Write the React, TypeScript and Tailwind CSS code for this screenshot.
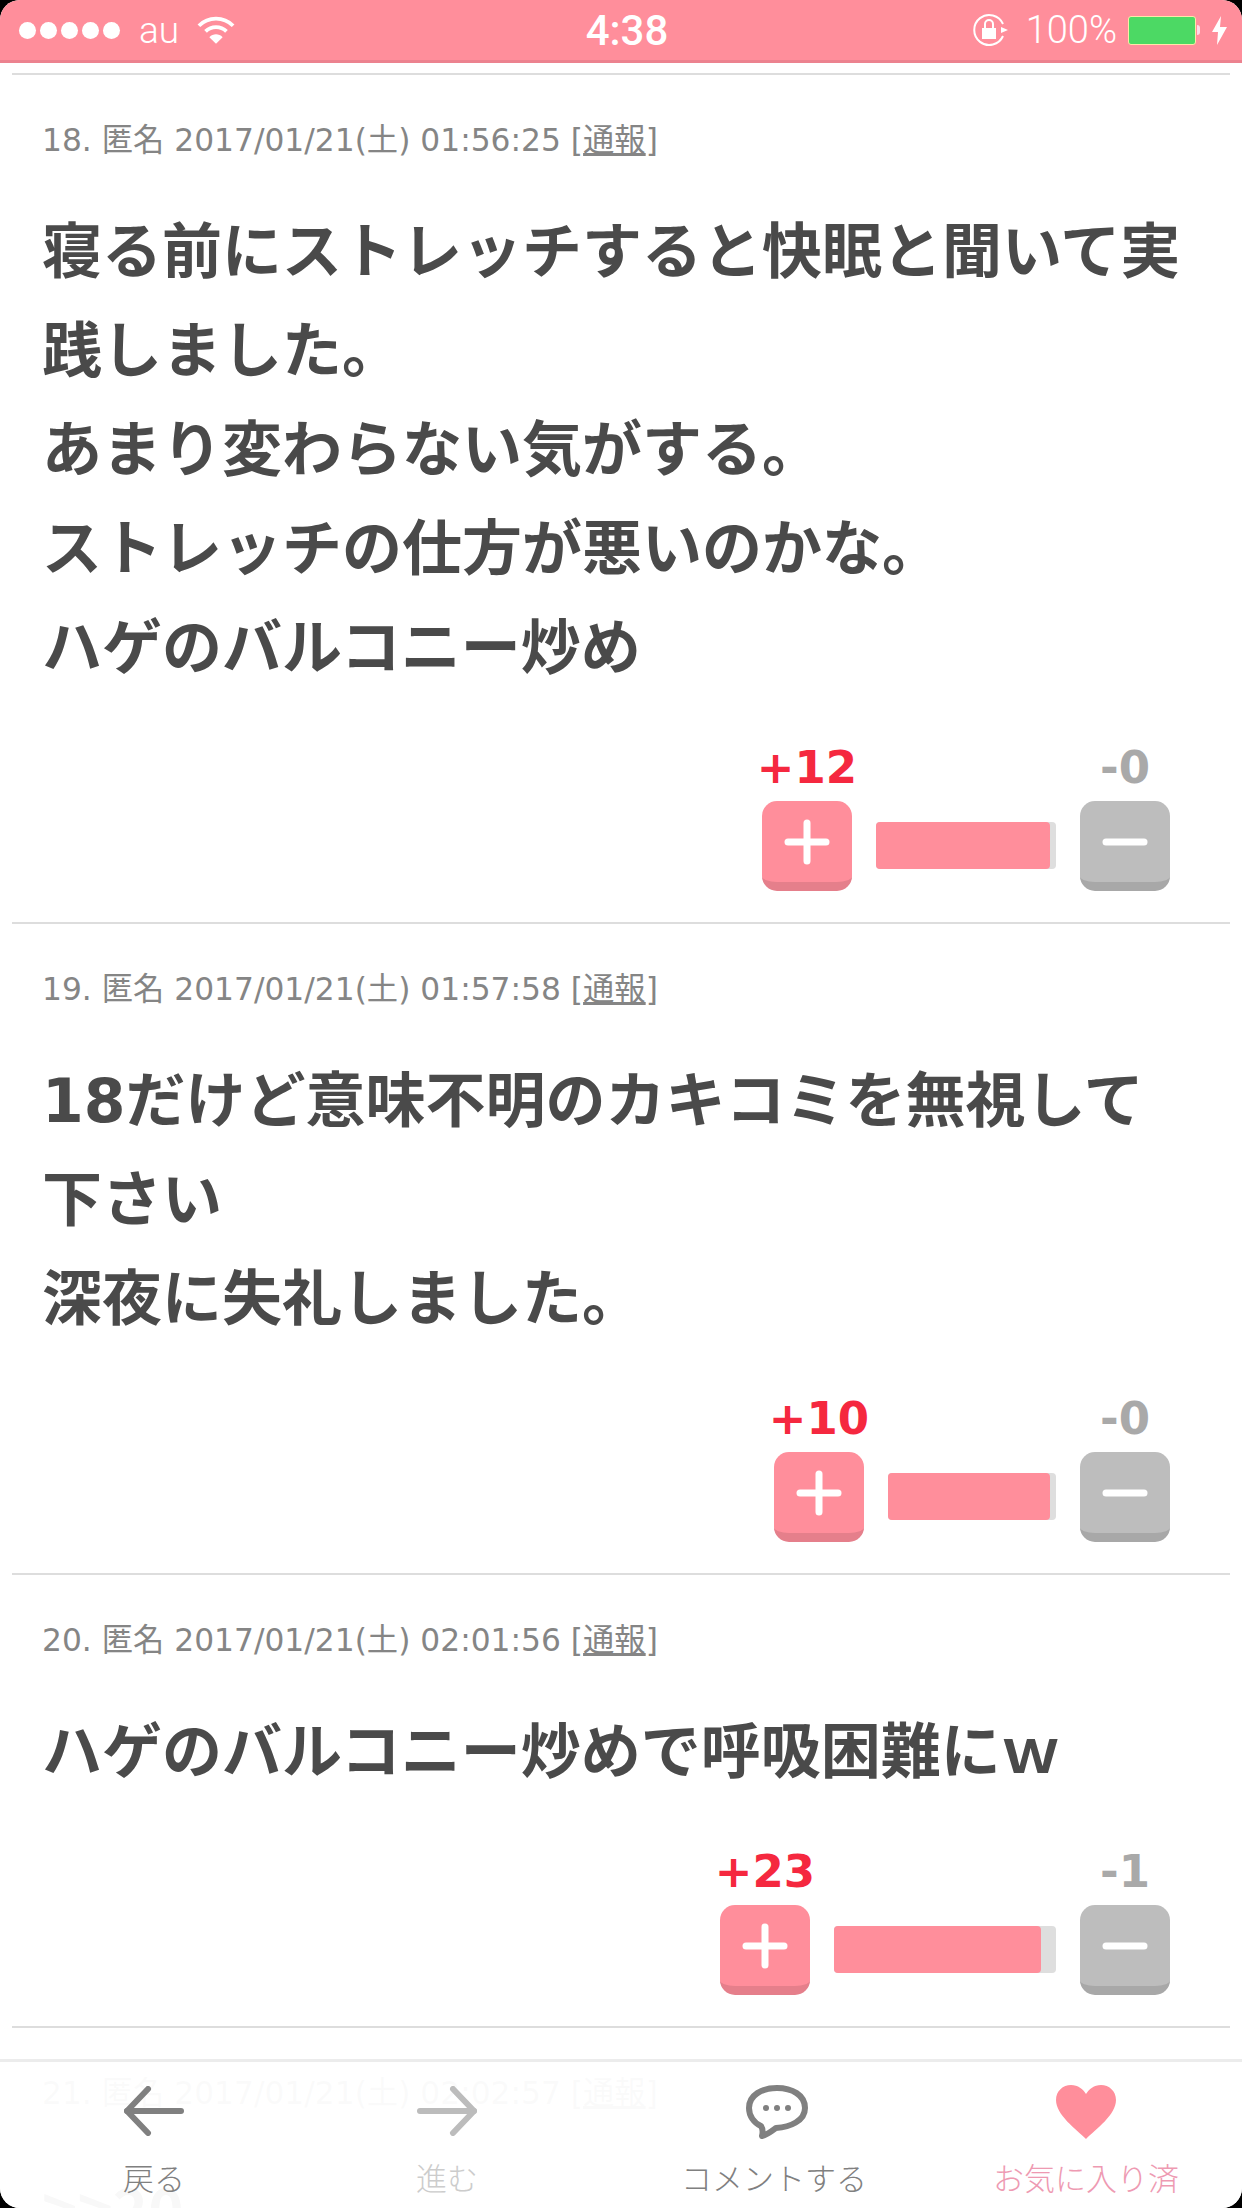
import React from "react";

type Post = {
  no: number;
  time: string;
  body: string;
  plus: number;
  minus: number;
  barWidth: string;
  fillWidth: string;
};

const posts: Post[] = [
  {
    no: 18,
    time: "01:56:25",
    body: "寝る前にストレッチすると快眠と聞いて実践しました。\nあまり変わらない気がする。\nストレッチの仕方が悪いのかな。\nハゲのバルコニー炒め",
    plus: 12,
    minus: 0,
    barWidth: "w-[180px]",
    fillWidth: "w-[174px]",
  },
  {
    no: 19,
    time: "01:57:58",
    body: "18だけど意味不明のカキコミを無視して下さい\n深夜に失礼しました。",
    plus: 10,
    minus: 0,
    barWidth: "w-[168px]",
    fillWidth: "w-[162px]",
  },
  {
    no: 20,
    time: "02:01:56",
    body: "ハゲのバルコニー炒めで呼吸困難にｗ",
    plus: 23,
    minus: 1,
    barWidth: "w-[222px]",
    fillWidth: "w-[207px]",
  },
];

function StatusBar() {
  return (
    <div className="relative h-[63px] shrink-0 bg-[#ff8e9b] border-b-[3px] border-[#ec828f] text-white font-['Roboto',sans-serif]">
      <div className="flex h-full items-center pl-[19px] pr-[15px]">
        <div className="flex gap-[4px]">
          {[0, 1, 2, 3, 4].map((i) => (
            <span key={i} className="h-[17px] w-[17px] rounded-full bg-white" />
          ))}
        </div>
        <span className="ml-[19px] text-[37px] font-light leading-none">au</span>
        <svg className="ml-[18px]" width="38" height="29" viewBox="0 0 40 30" fill="none" stroke="#fff" strokeWidth="4">
          <path d="M2 10 C12 0 28 0 38 10" />
          <path d="M9 16 C15 10 25 10 31 16" />
          <path d="M20 29 L13 22 C17 18 23 18 27 22 Z" fill="#fff" stroke="none" />
        </svg>
        <div className="ml-auto flex items-center">
          <svg width="36" height="34" viewBox="0 0 36 34" fill="none" stroke="#fff" strokeWidth="2">
            <path d="M31 23 A15 15 0 1 1 31 11" />
            <path d="M29 14 L36 17 L29 20 Z" fill="#fff" stroke="none" />
            <rect x="10" y="15" width="14" height="11" fill="#fff" stroke="none" />
            <path d="M13 15 V11 A4 4 0 0 1 21 11 V15" />
          </svg>
          <span className="ml-[18px] text-[38px] font-light leading-none">100%</span>
          <div className="ml-[11px] h-[29px] w-[68px] rounded-[3px] border border-[#ffe7a8] bg-[#4cd964]" />
          <span className="ml-[1px] h-[10px] w-[3px] rounded-r-sm bg-[#ffd9e6]" />
          <svg className="ml-[12px]" width="15" height="29" viewBox="0 0 15 29" fill="#fff">
            <polygon points="9,0 0,16 6,16 5,29 15,11 8,11" />
          </svg>
        </div>
      </div>
      <span className="absolute left-[627px] top-[31px] -translate-x-1/2 -translate-y-1/2 text-[42px] font-medium leading-none">
        4:38
      </span>
    </div>
  );
}

function VoteButton({ kind }: { kind: "plus" | "minus" }) {
  const isPlus = kind === "plus";
  return (
    <div
      className={
        isPlus
          ? "flex h-[90px] w-[90px] items-center justify-center rounded-[15px] border-b-[9px] border-[#e57f8b] bg-[#ff8e9b]"
          : "flex h-[90px] w-[90px] items-center justify-center rounded-[15px] border-b-[9px] border-[#a8a8a8] bg-[#bdbdbd]"
      }
    >
      <svg width="46" height="46" viewBox="0 0 46 46" stroke="#fff" strokeWidth="7" strokeLinecap="round">
        <path d="M4 23 H42" />
        {isPlus && <path d="M23 4 V42" />}
      </svg>
    </div>
  );
}

function PostRow({ post }: { post: Post }) {
  return (
    <div className="mx-3 border-t-2 border-[#dddddd] pl-[30px] pr-[30px]">
      <p className="mt-[42px] text-[31.3px] leading-[46px] text-[#858585]">
        {post.no}. 匿名 2017/01/21(土) {post.time} [<span className="underline">通報</span>]
      </p>
      <p className="mt-[40px] whitespace-pre-line text-[60px] font-bold leading-[99px] text-[#4a4a4a]">{post.body}</p>
      <div className="mt-[47px] flex justify-end gap-[24px] pr-[30px] pb-[31px]">
        <div className="flex w-[90px] flex-col items-center">
          <span className="mb-[10px] whitespace-nowrap text-[45px] font-bold leading-[46px] text-[#f5283f]">+{post.plus}</span>
          <VoteButton kind="plus" />
        </div>
        <div className={`mt-[77px] h-[47px] rounded-[4px] bg-[#dedede] ${post.barWidth}`}>
          <div className={`h-full rounded-[4px] bg-[#ff8e9b] ${post.fillWidth}`} />
        </div>
        <div className="flex w-[90px] flex-col items-center">
          <span className="mb-[10px] whitespace-nowrap text-[45px] font-bold leading-[46px] text-[#a9a9a9]">-{post.minus}</span>
          <VoteButton kind="minus" />
        </div>
      </div>
    </div>
  );
}

function BottomBar() {
  return (
    <div className="absolute inset-x-0 bottom-0 grid h-[149px] grid-cols-[308px_278px_376px_248px] border-t-[3px] border-[#ececec] bg-white/[0.96] font-['Noto_Sans_CJK_JP',sans-serif] text-[31px] font-light">
      <div className="flex flex-col items-center text-[#808080]">
        <svg className="mt-[24px]" width="60" height="50" viewBox="0 0 60 50" fill="none" stroke="#808080" strokeWidth="6" strokeLinecap="round" strokeLinejoin="round">
          <path d="M24 3 L3 25 L24 47" />
          <path d="M3 25 H57" />
        </svg>
        <span className="mt-[21px] leading-[40px]">戻る</span>
      </div>
      <div className="flex flex-col items-center text-[#cccccc]">
        <svg className="mt-[24px]" width="60" height="50" viewBox="0 0 60 50" fill="none" stroke="#bcbcbc" strokeWidth="6" strokeLinecap="round" strokeLinejoin="round">
          <path d="M36 3 L57 25 L36 47" />
          <path d="M57 25 H3" />
        </svg>
        <span className="mt-[21px] leading-[40px]">進む</span>
      </div>
      <div className="flex flex-col items-center text-[#808080]">
        <svg className="ml-[6px] mt-[23px]" width="62" height="54" viewBox="0 0 62 54" fill="none">
          <path
            d="M31 3 C46 3 59 10 59 23 C59 36 44 42 30 43 C26 46 21 50 16 51 C17 47 17 44 15 41 C8 38 3 31 3 23 C3 10 16 3 31 3 Z"
            stroke="#808080"
            strokeWidth="6"
            strokeLinejoin="round"
          />
          <circle cx="20" cy="23" r="3" fill="#808080" />
          <circle cx="31" cy="23" r="3" fill="#808080" />
          <circle cx="42" cy="23" r="3" fill="#808080" />
        </svg>
        <span className="mt-[18px] leading-[40px]">コメントする</span>
      </div>
      <div className="flex flex-col items-center text-[#ee9ab2]">
        <svg className="mt-[23px]" width="60" height="54" viewBox="0 0 60 54" fill="#ff8e9b">
          <path d="M30 54 C20 44 0 30 0 15 C0 6 7 0 15 0 C22 0 27 4 30 9 C33 4 38 0 45 0 C53 0 60 6 60 15 C60 30 40 44 30 54 Z" />
        </svg>
        <span className="mt-[18px] leading-[40px]">お気に入り済</span>
      </div>
    </div>
  );
}

export default function App() {
  return (
    <div className="h-[2208px] w-[1242px] bg-black">
      <div className="relative flex h-full w-full flex-col overflow-hidden rounded-[20px] bg-white font-['DejaVu_Sans','Noto_Sans_CJK_JP',sans-serif]">
        <StatusBar />
        <div className="mt-[10px]">
          {posts.map((post) => (
            <PostRow key={post.no} post={post} />
          ))}
          <div className="mx-3 border-t-2 border-[#dddddd] pl-[30px] pr-[30px]">
            <p className="mt-[42px] text-[31.3px] leading-[46px] text-[#858585]">
              21. 匿名 2017/01/21(土) 02:02:57 [<span className="underline">通報</span>]
            </p>
            <p className="mt-[40px] font-['Noto_Sans_CJK_JP',sans-serif] text-[60px] font-bold leading-[99px] text-[#4a4a4a]">&gt;&gt;20</p>
          </div>
        </div>
        <BottomBar />
      </div>
    </div>
  );
}
